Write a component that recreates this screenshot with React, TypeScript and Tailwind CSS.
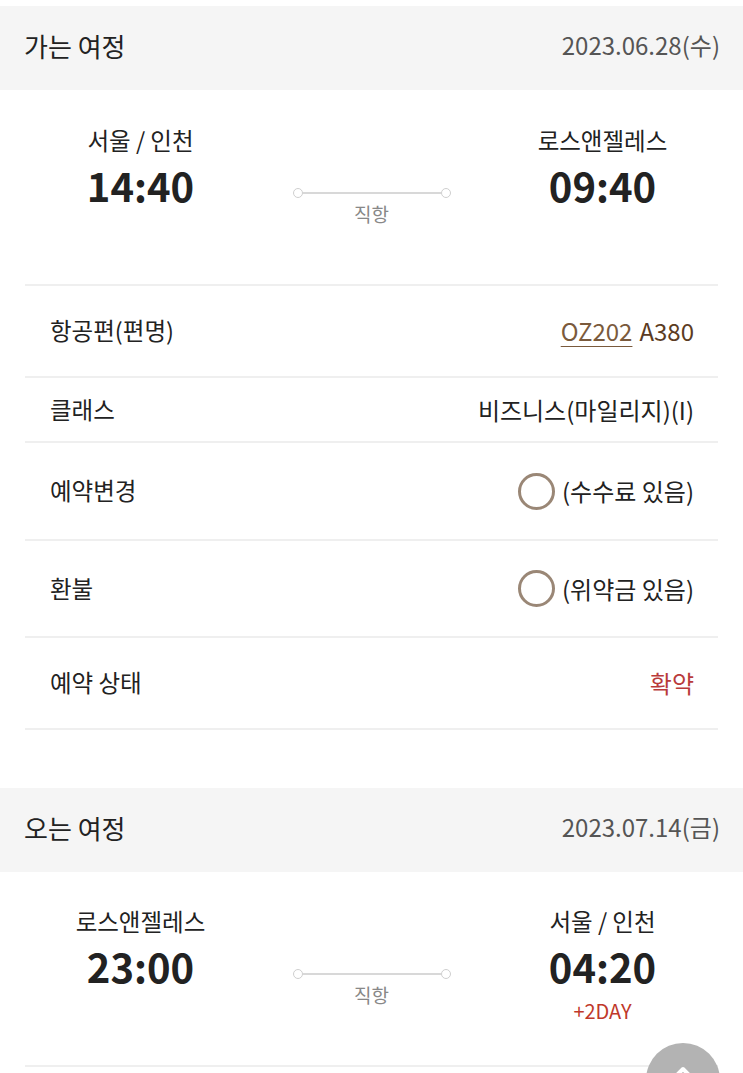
import React from "react";

const font = { fontFamily: '"Noto Sans CJK KR", "Noto Sans", sans-serif' };

const SectionHeader = ({ title, date }: { title: string; date: string }) => (
  <div className="flex h-[84px] items-center justify-between bg-[#f5f5f5] pb-[6px] pl-6 pr-[23px]">
    <span className="text-[26px] text-[#222]">{title}</span>
    <span className="text-[24px] text-[#555]">{date}</span>
  </div>
);

const Connector = () => (
  <div className="flex flex-col items-center pt-[63px]">
    <div className="flex w-[158px] items-center">
      <span className="h-[10px] w-[10px] shrink-0 rounded-full border-[1.5px] border-[#cfcfcf] bg-white" />
      <span className="h-[2px] flex-1 bg-[#d8d8d8]" />
      <span className="h-[10px] w-[10px] shrink-0 rounded-full border-[1.5px] border-[#cfcfcf] bg-white" />
    </div>
    <span className="mt-[4px] text-[19px] leading-[24px] text-[#888]">직항</span>
  </div>
);

const FlightBlock = ({
  from,
  dep,
  to,
  arr,
  plusDay,
  className,
}: {
  from: string;
  dep: string;
  to: string;
  arr: string;
  plusDay?: string;
  className: string;
}) => (
  <div className={`mx-[25px] grid grid-cols-3 border-b-2 border-[#efefef] ${className}`}>
    <div className="flex flex-col items-center">
      <span className="text-[23.5px] leading-[30px] text-[#222]">{from}</span>
      <span className="mt-[7px] text-[40px] font-bold leading-[46px] text-[#222]">{dep}</span>
    </div>
    <Connector />
    <div className="flex flex-col items-center">
      <span className="text-[23.5px] leading-[30px] text-[#222]">{to}</span>
      <span className="mt-[7px] text-[40px] font-bold leading-[46px] text-[#222]">{arr}</span>
      {plusDay && (
        <span className="mt-[10px] text-[20px] leading-[24px] text-[#c0392b]">{plusDay}</span>
      )}
    </div>
  </div>
);

const Row = ({ label, h, children }: { label: string; h: string; children: React.ReactNode }) => (
  <div className={`mx-[25px] flex items-center justify-between border-b-2 border-[#efefef] pl-[25px] pr-[24px] ${h}`}>
    <span className="text-[23.5px] text-[#222]">{label}</span>
    <div className="flex items-center text-[24px] text-[#222]">{children}</div>
  </div>
);

const Ring = () => (
  <span className="mr-[7px] inline-block h-[37px] w-[37px] rounded-full border-[3px] border-[#9a8776]" />
);

export default function App() {
  return (
    <div className="relative min-h-[1073px] w-[743px] overflow-hidden bg-white pt-[6px]" style={font}>
      <SectionHeader title="가는 여정" date="2023.06.28(수)" />
      <FlightBlock
        from="서울 / 인천"
        dep="14:40"
        to="로스앤젤레스"
        arr="09:40"
        className="h-[196px] pt-[35px]"
      />

      <Row label="항공편(편명)" h="h-[92px]">
        <span className="text-[#7a5a3c] underline decoration-1 underline-offset-[5px]">OZ202</span>
        <span className="ml-[7px] text-[#5b3b22]">A380</span>
      </Row>
      <Row label="클래스" h="h-[65px]">
        비즈니스(마일리지)(I)
      </Row>
      <Row label="예약변경" h="h-[98px]">
        <Ring />
        (수수료 있음)
      </Row>
      <Row label="환불" h="h-[97px]">
        <Ring />
        (위약금 있음)
      </Row>
      <Row label="예약 상태" h="h-[92px]">
        <span className="text-[#b93a3a]">확약</span>
      </Row>

      <div className="mt-[58px]">
        <SectionHeader title="오는 여정" date="2023.07.14(금)" />
      </div>
      <FlightBlock
        from="로스앤젤레스"
        dep="23:00"
        to="서울 / 인천"
        arr="04:20"
        plusDay="+2DAY"
        className="h-[195px] pt-[34px]"
      />

      {/* scroll to top */}
      <button className="absolute left-[646px] top-[1043px] flex h-[74px] w-[74px] justify-center rounded-full bg-[#b3b3b3] pt-[22px]">
        <svg width="26" height="16" viewBox="0 0 26 16" fill="none">
          <path d="M3 14 L13 4 L23 14" stroke="white" strokeWidth="4" strokeLinecap="round" strokeLinejoin="round" />
        </svg>
      </button>
    </div>
  );
}
